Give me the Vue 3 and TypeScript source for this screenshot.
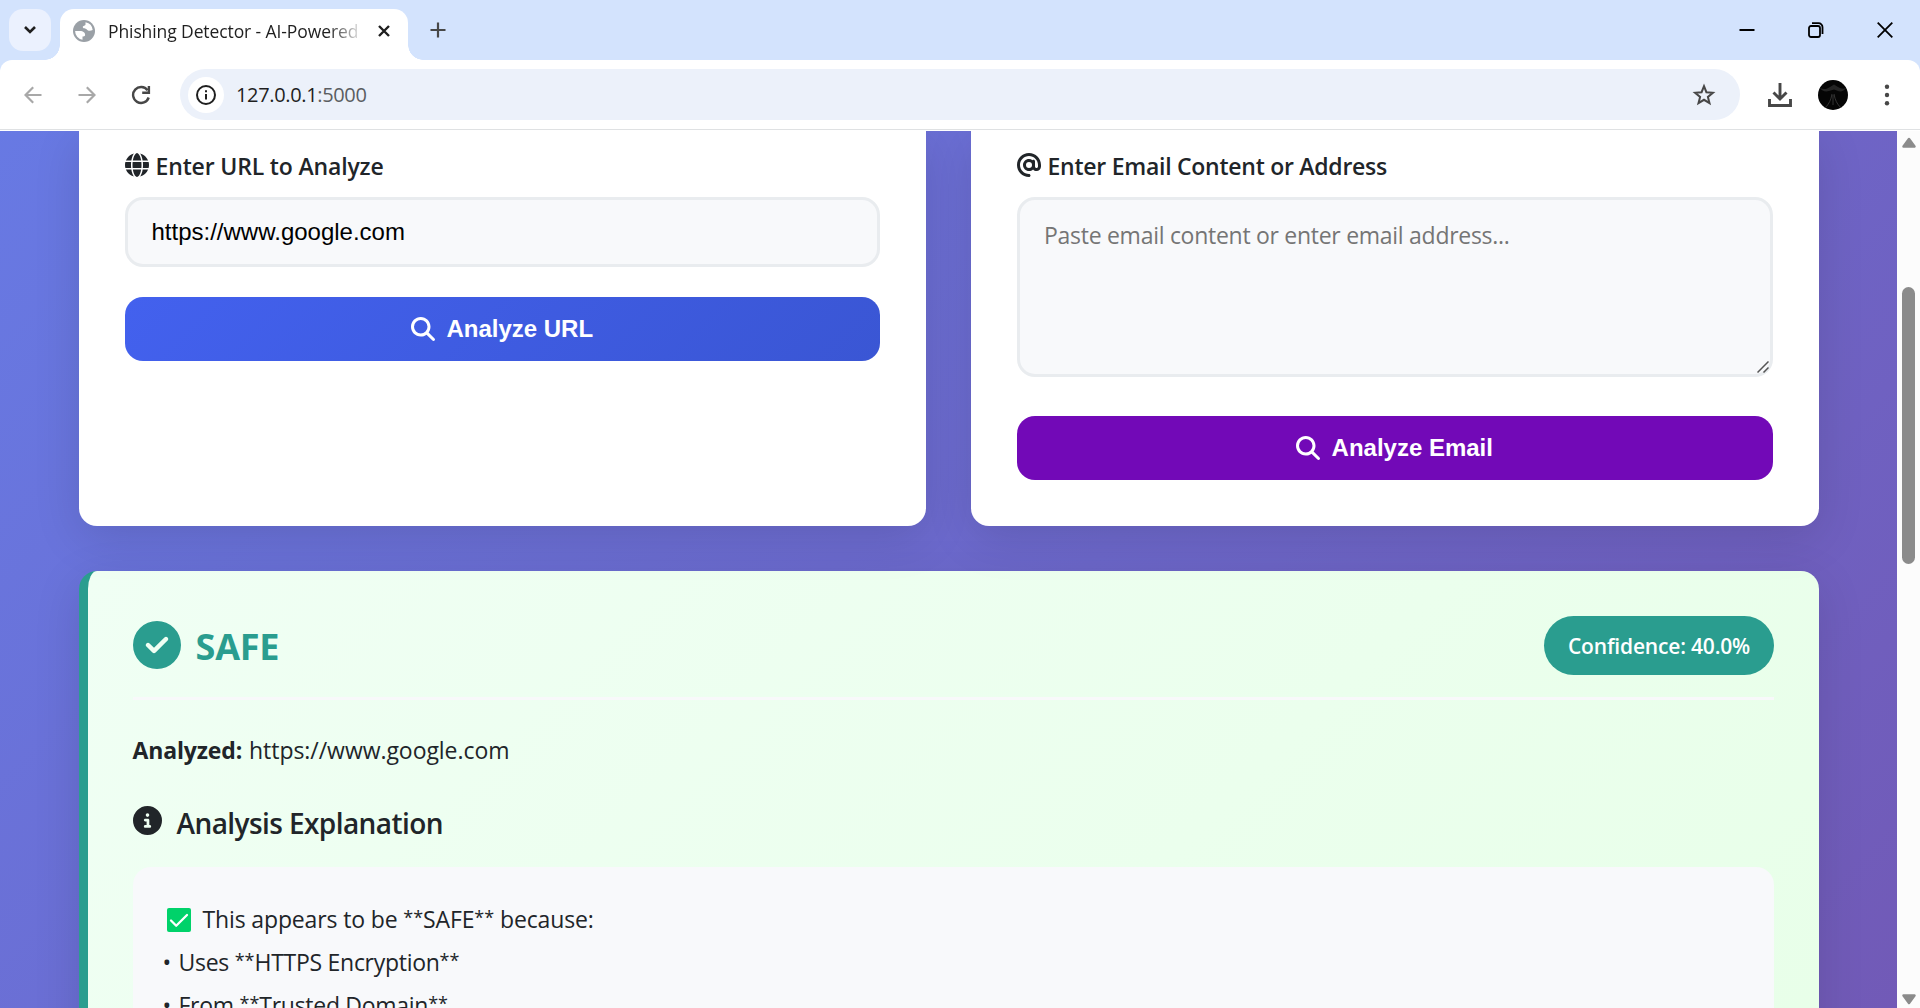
<script setup lang="ts">
import { ref } from 'vue'

const url = ref('https://www.google.com')
const email = ref('')
const summary = ['This appears to be ', '**', 'SAFE', '**', ' because:']
const findings = [
  ['Uses ', '**', 'HTTPS Encryption', '**'],
  ['From ', '**', 'Trusted Domain', '**'],
]

const icons = {
  search:
    'M416 208c0 45.9-14.9 88.3-40 122.7L502.6 457.4c12.5 12.5 12.5 32.8 0 45.3s-32.8 12.5-45.3 0L330.7 376c-34.4 25.2-76.8 40-122.7 40C93.1 416 0 322.9 0 208S93.1 0 208 0S416 93.1 416 208zM208 352a144 144 0 1 0 0-288 144 144 0 1 0 0 288z',
  check:
    'M256 512A256 256 0 1 0 256 0a256 256 0 1 0 0 512zM369 209L241 337c-9.4 9.4-24.6 9.4-33.9 0l-64-64c-9.4-9.4-9.4-24.6 0-33.9s24.6-9.4 33.9 0l47 47L335 175c9.4-9.4 24.6-9.4 33.9 0s9.4 24.6 0 33.9z',
  info: 'M256 512A256 256 0 1 0 256 0a256 256 0 1 0 0 512zM216 336h24V272H216c-13.3 0-24-10.7-24-24s10.7-24 24-24h48c13.3 0 24 10.7 24 24v88h8c13.3 0 24 10.7 24 24s-10.7 24-24 24H216c-13.3 0-24-10.7-24-24s10.7-24 24-24zm40-208a32 32 0 1 1 0 64 32 32 0 1 1 0-64z',
  globe:
    'M352 256c0 22.2-1.2 43.6-3.3 64H163.3c-2.2-20.4-3.3-41.8-3.3-64s1.2-43.6 3.3-64H348.7c2.2 20.4 3.3 41.8 3.3 64zm28.8-64H503.9c5.3 20.5 8.1 41.9 8.1 64s-2.8 43.5-8.1 64H380.8c2.1-20.6 3.2-42 3.2-64s-1.1-43.4-3.2-64zm112.6-32H376.7c-10-63.9-29.8-117.4-55.3-151.6c78.3 20.7 142 77.5 171.9 151.6zm-149.1 0H167.7c6.1-36.4 15.5-68.6 27-94.7c10.5-23.6 22.2-40.7 33.5-51.5C239.4 3.2 248.7 0 256 0s16.6 3.2 27.8 13.8c11.3 10.8 23 27.9 33.5 51.5c11.6 26 20.9 58.2 27 94.7zm-209 0H18.6C48.6 85.9 112.2 29.1 190.6 8.4C165.1 42.6 145.3 96.1 135.3 160zM8.1 192H131.2c-2.1 20.6-3.2 42-3.2 64s1.1 43.4 3.2 64H8.1C2.8 299.5 0 278.1 0 256s2.8-43.5 8.1-64zM194.7 446.6c-11.6-26-20.9-58.2-27-94.6H344.3c-6.1 36.4-15.5 68.6-27 94.6c-10.5 23.6-22.2 40.7-33.5 51.5C272.6 508.8 263.3 512 256 512s-16.6-3.2-27.8-13.8c-11.3-10.8-23-27.9-33.5-51.5zM135.3 352c10 63.9 29.8 117.4 55.3 151.6C112.2 482.9 48.6 426.1 18.6 352H135.3zm358.1 0c-30 74.1-93.6 130.9-171.9 151.6c25.5-34.2 45.2-87.7 55.3-151.6H493.4z',
  at: 'M256 64C150 64 64 150 64 256s86 192 192 192c17.7 0 32 14.3 32 32s-14.3 32-32 32C114.6 512 0 397.4 0 256S114.6 0 256 0S512 114.6 512 256v32c0 53-43 96-96 96c-29.3 0-55.6-13.2-73.2-33.9C320 371.1 289.5 384 256 384c-70.7 0-128-57.3-128-128s57.3-128 128-128c27.9 0 53.7 8.9 74.7 24.1c5.7-5 13.1-8.1 21.3-8.1c17.7 0 32 14.3 32 32v80 32c0 17.7 14.3 32 32 32s32-14.3 32-32V256c0-106-86-192-192-192zm64 192a64 64 0 1 0 -128 0 64 64 0 1 0 128 0z',
}
</script>

<template>
  <div class="window">
    <header class="tabstrip">
      <button class="tab-search" aria-label="Search tabs">
        <svg width="14" height="10" viewBox="0 0 14 10"><path d="M2 2l5 5 5-5" fill="none" stroke="#1f1f1f" stroke-width="2.6" /></svg>
      </button>
      <div class="tab">
        <svg class="favicon" viewBox="0 0 22 22">
          <circle cx="11" cy="11" r="11" fill="#9aa0a6" />
          <path fill="#fff" d="M12.500 2.200v2.300c0 1.500-2.700.9-2.700 2.500 0 2 2.900.9 4 2.500 1.200 1.700 3.500 1.700 5.900.6a8.900 8.900 0 0 0-7.200-7.900z" />
          <path fill="#fff" d="M2.100 11h4.700c3.500.1 5.600 1.500 5.300 4.300-.2 1.300-1.700 1.100-2.600 1.300v3.200A8.900 8.900 0 0 1 2.100 11z" />
        </svg>
        <span class="tab-title">Phishing Detector - AI-Powered</span>
        <svg class="tab-close" width="12" height="12" viewBox="0 0 12 12"><path d="M1 1l10 10M11 1L1 11" stroke="#1f1f1f" stroke-width="2.4" /></svg>
      </div>
      <svg class="new-tab" width="16" height="16" viewBox="0 0 16 16"><path d="M8 .5v15M.5 8h15" stroke="#474747" stroke-width="2.2" /></svg>
      <div class="window-controls">
        <svg width="16" height="16" viewBox="0 0 16 16"><path d="M.5 8h15" stroke="#000" stroke-width="2" /></svg>
        <svg width="16" height="16" viewBox="0 0 16 16" fill="none" stroke="#000" stroke-width="1.800">
          <rect x="1" y="4" width="11" height="11" rx="2" />
          <path d="M4 1.200h6.500a4 4 0 0 1 4 4V12" />
        </svg>
        <svg width="16" height="16" viewBox="0 0 16 16"><path d="M.7.7l14.600 14.600M15.300.7L.7 15.300" stroke="#000" stroke-width="1.800" /></svg>
      </div>
    </header>

    <div class="toolbar">
      <svg class="nav" width="18" height="18" viewBox="0 0 18 18" fill="none" stroke="#a8a8a8" stroke-width="2.200"><path d="M17.500 9H2M9.200 1.200L1.500 9l7.700 7.800" /></svg>
      <svg class="nav" width="18" height="18" viewBox="0 0 18 18" fill="none" stroke="#a8a8a8" stroke-width="2.200"><path d="M.5 9H16M8.800 1.200L16.500 9l-7.700 7.800" /></svg>
      <svg class="nav" width="20" height="20" viewBox="0 0 20 20" fill="none" stroke="#474747" stroke-width="2.400">
        <path d="M16.600 5.300A8 8 0 1 0 17.700 12.500" />
        <path d="M17.900 1v6.700h-6.700" />
      </svg>
      <div class="omnibox">
        <span class="site-info">
          <svg width="20" height="20" viewBox="0 0 20 20" fill="none" stroke="#1f1f1f" stroke-width="2">
            <circle cx="10" cy="10" r="9" />
            <path d="M10 9v5.500M10 5.200v2" />
          </svg>
        </span>
        <span class="address">127.0.0.1<span class="port">:5000</span></span>
        <svg class="star" width="24" height="24" viewBox="0 0 24 24">
          <path fill="none" stroke="#474747" stroke-width="2" d="M12 3.200l2.400 6 6.500.5-5 4.200 1.600 6.300-5.500-3.400-5.500 3.400 1.600-6.300-5-4.200 6.500-.5z" />
        </svg>
      </div>
      <svg class="download" width="24" height="24" viewBox="0 0 24 24" fill="none" stroke="#474747" stroke-width="2.900">
        <path d="M12 0v15.500M5.500 9.500l6.500 6.500 6.500-6.500M1.500 16v6.500h21V16" />
      </svg>
      <svg class="avatar" width="30" height="30" viewBox="0 0 30 30">
        <circle cx="15" cy="15" r="15" fill="#050505" />
        <path d="M2 8c4 2 7 1 10-1l4-2.500 4 2.500c3 1.500 5 2.500 8 1-2 3-5 4-8 3l-4-1.500-5 1.500c-4 1-7 0-9-3z" fill="#242424" />
        <path d="M14 14c-1 6-3 10-7 14M16 14c1 6 3 10 7 14M15 15v10" fill="none" stroke="#3a3a3a" stroke-width=".9" />
      </svg>
      <svg class="menu" width="6" height="22" viewBox="0 0 6 22" fill="#474747">
        <circle cx="3" cy="2.700" r="2.200" />
        <circle cx="3" cy="11" r="2.200" />
        <circle cx="3" cy="19.300" r="2.200" />
      </svg>
    </div>

    <div class="viewport">
      <main class="page">
        <div class="cards">
          <section class="card">
            <label class="label" for="url">
              <svg class="label-icon" viewBox="0 0 512 512"><path :d="icons.globe" /></svg>
              <span class="label-url">Enter URL to Analyze</span>
            </label>
            <input id="url" v-model="url" class="field" type="text" />
            <button class="btn btn-url">
              <svg viewBox="0 0 512 512"><path :d="icons.search" /></svg>
              <span>Analyze URL</span>
            </button>
          </section>

          <section class="card card-email">
            <label class="label" for="email">
              <svg class="label-icon" viewBox="0 0 512 512"><path :d="icons.at" /></svg>
              <span class="label-email">Enter Email Content or Address</span>
            </label>
            <div class="area-wrap">
              <textarea id="email" v-model="email" class="field area" placeholder="Paste email content or enter email address..."></textarea>
              <svg class="grip" width="12" height="12" viewBox="0 0 12 12"><path d="M.5 11.500l11-11M6.500 11.500l5-5" stroke="#555" stroke-width="1.500" /></svg>
            </div>
            <button class="btn btn-email">
              <svg viewBox="0 0 512 512"><path :d="icons.search" /></svg>
              <span>Analyze Email</span>
            </button>
          </section>
        </div>

        <section class="result">
          <div class="result-head">
            <div class="verdict">
              <svg viewBox="0 0 512 512"><path :d="icons.check" /></svg>
              <span>SAFE</span>
            </div>
            <div class="confidence"><span>Confidence: 40.0%</span></div>
          </div>
          <p class="analyzed"><strong>Analyzed:</strong><span>https://www.google.com</span></p>
          <h3 class="explain-title">
            <svg viewBox="0 0 512 512"><path :d="icons.info" /></svg>
            <span>Analysis Explanation</span>
          </h3>
          <div class="explain">
            <div class="line summary">
              <svg width="24" height="24" viewBox="0 0 24 24">
                <rect width="24" height="24" rx="2" fill="#00d26a" />
                <path d="M4 12.500l5.200 5.200L20 7" fill="none" stroke="#fff" stroke-width="2.300" stroke-linecap="round" stroke-linejoin="round" />
              </svg>
              <span><span v-for="(part, i) in summary" :key="i" :class="{ stars: part === '**' }">{{ part }}</span></span>
            </div>
            <div v-for="(parts, n) in findings" :key="n" class="line finding">
              <span class="bullet">•</span><span v-for="(part, i) in parts" :key="i" :class="{ stars: part === '**' }">{{ part }}</span>
            </div>
          </div>
        </section>
      </main>

      <div class="scrollbar">
        <svg width="16" height="12" viewBox="0 0 16 12"><path d="M8 2l5.500 7.500h-11z" fill="#8b8b8b" stroke="#8b8b8b" stroke-width="2.500" stroke-linejoin="round" /></svg>
        <div class="thumb"></div>
        <svg class="down" width="16" height="12" viewBox="0 0 16 12"><path d="M8 10l5.500-7.500h-11z" fill="#8b8b8b" stroke="#8b8b8b" stroke-width="2.500" stroke-linejoin="round" /></svg>
      </div>
    </div>
  </div>
</template>

<style>
html,
body {
  margin: 0;
  overflow: hidden;
}
</style>

<style scoped>
* {
  box-sizing: border-box;
}
svg {
  display: block;
  flex: none;
}
.window {
  width: 1920px;
  height: 1008px;
  overflow: hidden;
  display: flex;
  flex-direction: column;
  background: #d3e3fd;
  color: #212529;
  font-family: 'Segoe UI', 'Open Sans', 'Noto Sans', sans-serif;
  white-space: nowrap;
}

/* Tab strip */
.tabstrip {
  flex: none;
  height: 60px;
  display: flex;
  align-items: flex-start;
  padding: 9px 16px 0 9px;
}
.tab-search {
  width: 42px;
  height: 42px;
  margin-right: 9px;
  padding: 0;
  border: 0;
  border-radius: 14px;
  background: #ebf1fe;
  display: flex;
  align-items: center;
  justify-content: center;
}
.tab {
  position: relative;
  width: 348px;
  height: 51px;
  padding: 0 18px 8px 13px;
  border-radius: 14px 14px 0 0;
  background: #fff;
  display: flex;
  align-items: center;
}
.tab::before,
.tab::after {
  content: '';
  position: absolute;
  bottom: 0;
  width: 15px;
  height: 15px;
}
.tab::before {
  left: -15px;
  background: radial-gradient(circle at 0 0, transparent 14.5px, #fff 15px);
}
.tab::after {
  right: -15px;
  background: radial-gradient(circle at 100% 0, transparent 14.5px, #fff 15px);
}
.favicon {
  width: 22px;
  height: 22px;
}
.tab-title {
  width: 252px;
  margin: 0 0 0 13px;
  overflow: hidden;
  font-size: 17.500px;
  letter-spacing: -0.1px;
  color: #1f1f1f;
  -webkit-mask-image: linear-gradient(90deg, #000 220px, transparent 256px);
  mask-image: linear-gradient(90deg, #000 220px, transparent 256px);
}
.tab-close {
  margin-left: auto;
}
.new-tab {
  margin: 13px 0 0 22px;
}
.window-controls {
  margin: 13px 11px 0 auto;
  display: flex;
  gap: 53px;
}

/* Toolbar */
.toolbar {
  flex: none;
  height: 71px;
  padding: 0 30px 2px 25px;
  display: flex;
  align-items: center;
  background: #fff;
  border-radius: 12px 12px 0 0;
  box-shadow: inset 0 -1px #fff, inset 0 -2px #dfe1e3;
}
.nav {
  margin-right: 35px;
}
.nav:first-child {
  margin-left: -1px;
  margin-right: 36px;
}
.nav:nth-child(3) {
  margin-right: 29px;
}
.omnibox {
  width: 1560px;
  height: 51px;
  padding: 0 24px 0 8px;
  border-radius: 26px;
  background: #ecf1fa;
  display: flex;
  align-items: center;
}
.site-info {
  width: 36px;
  height: 36px;
  border-radius: 50%;
  background: #fff;
  display: flex;
  align-items: center;
  justify-content: center;
}
.address {
  margin: -1px 0 0 12px;
  font-size: 20px;
  letter-spacing: -0.35px;
  color: #1f1f1f;
}
.port {
  color: #5a5d61;
}
.star {
  margin-left: auto;
}
.download {
  margin-left: 28px;
}
.avatar {
  margin-left: 26px;
}
.menu {
  margin-left: 36px;
}

/* Page */
.viewport {
  height: 877px;
  display: flex;
}
.page {
  width: 1897px;
  height: 877px;
  overflow: hidden;
  padding: 0 78px 0 79px;
  background: linear-gradient(135deg, #667eea 0%, #764ba2 100%) 0 -417px / 1897px 2600px no-repeat;
}
.cards {
  position: relative;
  z-index: 1;
  display: flex;
  gap: 45px;
}
.card {
  width: 847px;
  height: 395px;
  padding: 17px 46px 0;
  border-radius: 0 0 18px 18px;
  background: #fff;
  box-shadow: 0 12px 48px rgba(0, 0, 0, 0.12);
}
.card-email {
  width: 848px;
}
.label {
  height: 34px;
  margin-bottom: 15px;
  display: flex;
  align-items: center;
  font-size: 23px;
  font-weight: 600;
}
.label-icon {
  width: 24px;
  height: 24px;
  margin: 0 7px 0 -0.500px;
  fill: #212529;
}
.label span {
  margin-top: 2px;
}
.label-url {
  letter-spacing: -0.16px;
}
.label-email {
  letter-spacing: -0.26px;
}
.field {
  display: block;
  width: 755px;
  height: 70px;
  padding: 0 23.500px;
  border: 3px solid #e9ecef;
  border-radius: 18px;
  background: #f8f9fb;
  color: #000;
  font: 24px 'Liberation Sans', Arial, sans-serif;
  outline: none;
}
.area-wrap {
  position: relative;
  width: 756px;
}
.area {
  width: 756px;
  height: 180px;
  padding: 17px 24px;
  resize: none;
  font: 23px/36px 'Segoe UI', 'Open Sans', sans-serif;
  letter-spacing: -0.28px;
}
.area::placeholder {
  color: #757575;
}
.grip {
  position: absolute;
  right: 4px;
  bottom: 4px;
}
.btn {
  width: 100%;
  height: 64px;
  margin-top: 30px;
  padding: 0 1px 0 0;
  border: 0;
  border-radius: 18px;
  color: #fff;
  display: flex;
  align-items: center;
  justify-content: center;
  gap: 11.500px;
  font: bold 24px 'Liberation Sans', Arial, sans-serif;
}
.btn svg {
  width: 24px;
  height: 24px;
  fill: #fff;
}
.btn-url {
  background: linear-gradient(135deg, #4361ee, #3a56d4);
}
.btn-email {
  margin-top: 39px;
  background: #7209b7;
}

/* Result */
.result {
  width: 1740px;
  height: 1000px;
  margin-top: 45px;
  padding: 45px 45px 0 44.500px;
  border-left: 9px solid #2a9d8f;
  border-radius: 18px;
  background: linear-gradient(135deg, #f0fff4, #e6ffe6);
  box-shadow: 0 12px 48px rgba(0, 0, 0, 0.12);
}
.result-head {
  height: 84px;
  display: flex;
  justify-content: space-between;
  border-bottom: 3px solid #f8f9fa;
}
.verdict {
  height: 58px;
  display: flex;
  align-items: center;
  gap: 15px;
  color: #2a9d8f;
  font-size: 36px;
  font-weight: 700;
  letter-spacing: -0.2px;
}
.verdict svg {
  width: 48px;
  height: 48px;
  fill: #2a9d8f;
}
.verdict span {
  margin-top: 2px;
}
.confidence {
  width: 230px;
  height: 59px;
  border-radius: 30px;
  background: #2a9d8f;
  color: #fff;
  display: flex;
  align-items: center;
  justify-content: center;
  font-size: 21px;
  font-weight: 600;
  letter-spacing: -0.18px;
}
.analyzed {
  height: 36px;
  margin: 32px 0 0;
  display: flex;
  align-items: center;
  gap: 7px;
  font-size: 23px;
  letter-spacing: -0.05px;
}
.analyzed strong {
  letter-spacing: -0.15px;
}
.explain-title {
  height: 44px;
  margin: 33px 0 22px;
  display: flex;
  align-items: center;
  gap: 15px;
  font-size: 28px;
  font-weight: 600;
  letter-spacing: -0.58px;
}
.explain-title svg {
  width: 29px;
  height: 29px;
  margin-bottom: 6px;
  fill: #212529;
}
.explain {
  height: 500px;
  padding: 31px 30px 30px;
  border-radius: 18px;
  background: #f8f9fb;
  font-size: 23px;
  letter-spacing: -0.14px;
}
.line {
  height: 43.200px;
  line-height: 43.200px;
}
.summary {
  display: flex;
  align-items: center;
  gap: 12px;
  padding-left: 4px;
}
.summary > span {
  white-space: pre;
}
.finding {
  letter-spacing: -0.28px;
}
.finding span {
  white-space: pre;
}
.bullet {
  display: inline-block;
  width: 16px;
}
.stars {
  font-size: 18px;
  line-height: 0;
  letter-spacing: 0;
  vertical-align: 4px;
}

/* Scrollbar */
.scrollbar {
  width: 23px;
  height: 877px;
  padding: 6px 0 3px;
  display: flex;
  flex-direction: column;
  align-items: center;
  background: #fcfcfc;
}
.thumb {
  width: 13px;
  height: 277px;
  margin-top: 138px;
  border-radius: 7px;
  background: #8b8b8b;
}
.down {
  margin-top: auto;
}
</style>
